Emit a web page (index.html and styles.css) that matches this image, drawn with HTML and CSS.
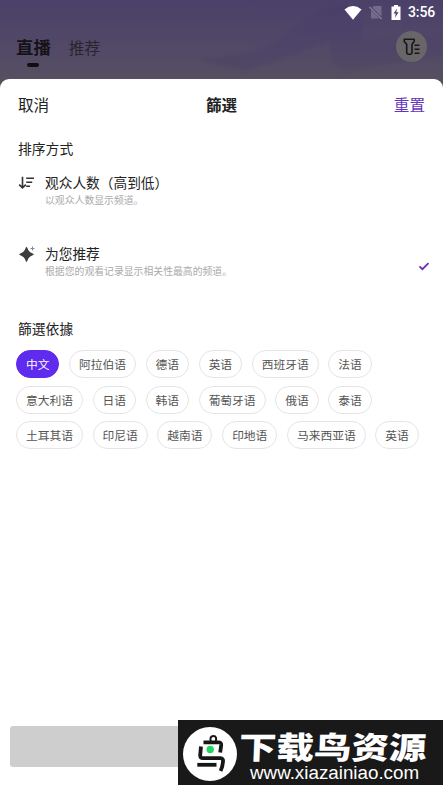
FILE: index.html
```html
<!DOCTYPE html>
<html lang="zh-CN">
<head>
<meta charset="utf-8">
<title>篩選</title>
<link rel="stylesheet" href="styles.css">
</head>
<body>
<div class="screen">
  <header class="top">
    <svg class="waves" viewBox="0 0 443 90" preserveAspectRatio="none">
      <path d="M200 60 Q260 53 280 40 Q310 10 345 5 L362 18 L362 40 L330 40 Q280 60 245 70Z" fill="#44366c" opacity=".25"/>
      <path d="M330 38 Q328 68 345 70 L443 55 V35 L362 40Z" fill="#44366c" opacity=".18"/>
    </svg>
    <div class="status">
      <svg width="18" height="14" viewBox="0 0 18 14"><path d="M.5 3.4Q9-3.2 17.5 3.4L9 13.8Z" fill="#fff"/></svg>
      <svg class="sim" width="14" height="15" viewBox="0 0 14 15"><path d="M5 1H12.5V13.5H2V4Z" fill="#746a8c"/><path d="M.8 2 13 14.2" stroke="#51476d" stroke-width="2.6"/><path d="M.3 1.8 12.7 14.2" stroke="#8a809f" stroke-width="1.2"/></svg>
      <svg class="battery" width="10" height="15" viewBox="0 0 10 15"><path d="M3 0H7V1.5H9.5V15H.5V1.5H3Z" fill="#fff"/><path d="M6 3.5 2.5 8.5H4.7L4 12.7 7.6 7.3H5.3Z" fill="#4c416c"/></svg>
      <span class="clock">3:56</span>
    </div>
    <nav class="tabs">
      <span class="tab active">直播</span>
      <span class="tab">推荐</span>
      <span class="filter">
        <svg width="18" height="18" viewBox="0 0 18 18" fill="none" stroke="#171717" stroke-width="1.6" stroke-linejoin="round"><path d="M1.3 1.3H11.2V3.6L9 6.2V14.6Q9 16.2 7.5 16.2H5.2Q3.7 16.2 3.7 14.6V6.2L1.3 3.6Z"/><path d="M11.5 7.3H16.5M11.5 11.3H16.5M11.5 15.3H16.5"/></svg>
      </span>
    </nav>
  </header>
  <main class="sheet">
    <div class="bar"><span>取消</span><b>篩選</b><span class="reset">重置</span></div>
    <h2>排序方式</h2>
    <div class="option">
      <svg class="icon" width="17" height="16" viewBox="0 0 17 16" fill="none" stroke="#333" stroke-width="1.6"><path d="M4.5 1.7V12.7M1.2 9.6 4.5 12.9 7.8 9.6M8.2 3.2H16M8.2 7.2H14.2M8.2 11.2H12"/></svg>
      <div class="copy"><div class="name">观众人数（高到低）</div><div class="note">以观众人数显示频道。</div></div>
    </div>
    <div class="option">
      <svg class="icon" width="17" height="16" viewBox="0 0 17 16"><path d="M8.5 1.7Q10 6.8 15 8.4Q10 10 8.5 15Q7 10 2 8.4Q7 6.8 8.5 1.7Z" fill="#3d3d3d" stroke="#3d3d3d" stroke-width="1.4" stroke-linejoin="round"/><path d="M14.5 .5V4.5M12.5 2.5H16.5" stroke="#888" stroke-width="1"/></svg>
      <div class="copy"><div class="name">为您推荐</div><div class="note">根据您的观看记录显示相关性最高的频道。</div></div>
      <svg class="check" width="12" height="9" viewBox="0 0 12 9" fill="none" stroke="#6c2cb6" stroke-width="1.8"><path d="M1.5 4.3 4.4 7.2 10.5 1.2"/></svg>
    </div>
    <h2 class="by">篩選依據</h2>
    <div class="chips">
      <div class="row"><span class="chip on">中文</span><span class="chip">阿拉伯语</span><span class="chip">德语</span><span class="chip">英语</span><span class="chip">西班牙语</span><span class="chip">法语</span></div>
      <div class="row"><span class="chip">意大利语</span><span class="chip">日语</span><span class="chip">韩语</span><span class="chip">葡萄牙语</span><span class="chip">俄语</span><span class="chip">泰语</span></div>
      <div class="row"><span class="chip">土耳其语</span><span class="chip">印尼语</span><span class="chip">越南语</span><span class="chip">印地语</span><span class="chip">马来西亚语</span><span class="chip">英语</span></div>
    </div>
    <div class="apply"></div>
  </main>
  <aside class="brand">
    <svg class="logo" width="54" height="54" viewBox="0 0 54 54"><circle cx="27" cy="27" r="27" fill="#fff"/><g fill="none" stroke="#161616" stroke-width="3.8"><path d="M20.5 15.3H35.5Q38.4 15.3 38.2 18L37.2 25.5"/><path d="M18 19.5 17.2 28Q17 31.2 20 31.2H37.5Q40.4 31.2 40 34.5Q39.6 40 37.6 44"/><path d="M14.3 37.8H33.5"/><path d="M27.8 15Q26.3 9 30.5 9Q34.3 9 32.7 15" stroke-width="2"/></g><circle cx="27.2" cy="22.5" r="3.7" fill="#22d75f"/></svg>
    <div class="words"><div class="brand-name">下载鸟资源</div><div class="url">www.xiazainiao.com</div></div>
  </aside>
</div>
</body>
</html>
```
FILE: styles.css
```css
* { box-sizing: border-box; }
body { margin: 0; background: #fff; font-family: "Noto Sans CJK SC", sans-serif; color: #222; }
svg { display: block; flex: none; }
.screen { position: relative; height: 787px; overflow: hidden; display: flex; flex-direction: column; background: #fff; }
.top { position: relative; flex: none; height: 90px; background: linear-gradient(#4b4069, #514868 45%, #56515f 100%); }
.waves { position: absolute; inset: 0; width: 100%; height: 100%; filter: blur(1.5px); }
.status { position: relative; height: 25px; display: flex; justify-content: flex-end; align-items: center; padding: 0 8px 0 0; }
.status .sim { margin-left: 7px; }
.battery { margin-left: 8px; }
.clock { margin-left: 7px; font: 500 14px/25px Roboto, sans-serif; color: #fff; width: 27px; white-space: nowrap; letter-spacing: -.1px; }
.tabs { position: relative; display: flex; align-items: flex-start; padding: 6px 16px 0; }
.tab { font-size: 15.7px; line-height: 33px; color: #29252e; margin-right: 18px; }
.tab.active { font-size: 17.4px; line-height: 32px; font-weight: 700; color: #151318; }
.tab.active::after { content: ""; display: block; width: 12px; height: 4px; margin: 0 auto; border-radius: 2px; background: #100e13; }
.filter { margin-left: auto; width: 31px; height: 31px; border-radius: 50%; background: #69666a; display: flex; align-items: center; justify-content: center; }
.sheet { position: relative; flex: 1; display: flex; flex-direction: column; margin-top: -11px; border-radius: 9px 9px 0 0; background: #fff; padding-bottom: 20px; }
.bar { display: grid; grid-template-columns: 1fr auto 1fr; padding: 0 18px; height: 52px; line-height: 51px; font-size: 15.6px; }
.bar b { font-family: "Noto Sans CJK TC", sans-serif; }
.reset { text-align: right; color: #6535bd; }
h2 { margin: 7px 18px 0; font-size: 13.8px; line-height: 20px; font-weight: 400; }
.option { display: flex; padding: 0 13px 0 18px; margin-top: 13px; height: 58px; }
h2 + .option { margin-top: 14px; }
.icon { margin-top: 3px; }
.copy { flex: 1; margin-left: 10px; }
.name { font-size: 13.7px; line-height: 20px; }
.note { font-size: 9.85px; line-height: 17px; color: #aaa; }
.check { align-self: flex-start; margin-top: 19px; }
h2.by { margin-top: 17px; font-family: "Noto Sans CJK TC", sans-serif; }
.chips { margin: 12px 16px 0; display: flex; flex-direction: column; gap: 7.5px; }
.row { display: flex; gap: 9.8px; }
.chip { height: 28px; line-height: 25px; padding: 0 8.9px; border: 1px solid #e5e5e5; border-radius: 14px; font-size: 11.75px; color: #555; white-space: nowrap; }
.chip.on { background: #5e2bef; border-color: #5e2bef; color: #fff; }
.apply { margin: auto 10px 0; height: 41px; border-radius: 3px; background: #cecece; }
.brand { position: absolute; left: 178px; top: 720px; width: 265px; height: 65px; background: #191919; display: flex; color: #fff; }
.logo { margin: 7px 0 0 5px; }
.words { margin-left: 2px; }
.brand-name { height: 41px; margin-top: 4px; font-size: 31px; line-height: 44px; font-weight: 900; white-space: nowrap; transform: scaleX(1.21) skewX(-2deg); transform-origin: 0 50%; }
.url { margin-left: 11px; font: 18.8px/18px "Liberation Sans", sans-serif; white-space: nowrap; position: relative; top: -1px; }
```
